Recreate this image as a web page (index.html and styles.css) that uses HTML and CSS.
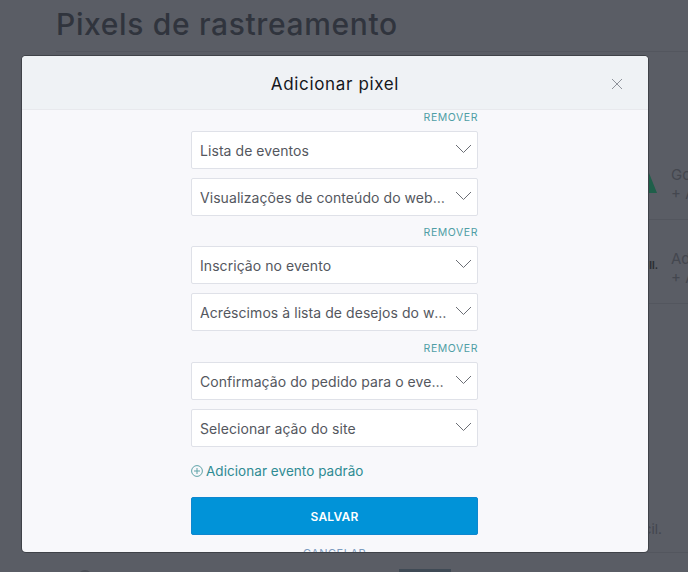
FILE: index.html
```html
<!DOCTYPE html>
<html lang="pt">
<head>
<meta charset="utf-8">
<title>Adicionar pixel</title>
<link rel="stylesheet" href="styles.css">
</head>
<body>
<main class="page">
  <h1 class="page-title">Pixels de rastreamento</h1>
  <section class="list">
    <div class="list-row row-google">
      <svg class="logo-triangle" width="12" height="32" viewBox="0 0 12 32"><path d="M0 32V2l12 30z" fill="#1f5f4a"/></svg>
      <div class="row-text"><span>Google</span><span>+ Adicionar</span></div>
    </div>
    <div class="list-row row-adroll">
      <span class="logo-word">oll.</span>
      <div class="row-text"><span>AdRoll</span><span>+ Adicionar</span></div>
    </div>
    <p class="list-note">fácil.</p>
  </section>
  <div class="page-foot"><span class="foot-dot"></span><span class="foot-bar"></span></div>
</main>

<div class="modal" role="dialog">
  <header class="modal-head">
    <h2 class="modal-title">Adicionar pixel</h2>
    <svg class="close" width="12" height="12" viewBox="0 0 12 12"><path d="M1 1l10 10M11 1L1 11" stroke="#8f939b" stroke-width="1" fill="none"/></svg>
  </header>
  <div class="modal-body">
    <div class="form">
      <div class="group group-first">
        <a class="remove">REMOVER</a>
        <div class="select"><span class="select-text">Lista de eventos</span><svg class="chev" width="17" height="10" viewBox="0 0 17 10"><path d="M1 1l7.500 7.500L16 1" stroke="#6b6e75" stroke-width="1" fill="none"/></svg></div>
        <div class="select"><span class="select-text">Visualizações de conteúdo do website</span><svg class="chev" width="17" height="10" viewBox="0 0 17 10"><path d="M1 1l7.500 7.500L16 1" stroke="#6b6e75" stroke-width="1" fill="none"/></svg></div>
      </div>
      <div class="group">
        <a class="remove">REMOVER</a>
        <div class="select"><span class="select-text">Inscrição no evento</span><svg class="chev" width="17" height="10" viewBox="0 0 17 10"><path d="M1 1l7.500 7.500L16 1" stroke="#6b6e75" stroke-width="1" fill="none"/></svg></div>
        <div class="select"><span class="select-text">Acréscimos à lista de desejos do website</span><svg class="chev" width="17" height="10" viewBox="0 0 17 10"><path d="M1 1l7.500 7.500L16 1" stroke="#6b6e75" stroke-width="1" fill="none"/></svg></div>
      </div>
      <div class="group">
        <a class="remove">REMOVER</a>
        <div class="select"><span class="select-text">Confirmação do pedido para o evento</span><svg class="chev" width="17" height="10" viewBox="0 0 17 10"><path d="M1 1l7.500 7.500L16 1" stroke="#6b6e75" stroke-width="1" fill="none"/></svg></div>
        <div class="select"><span class="select-text">Selecionar ação do site</span><svg class="chev" width="17" height="10" viewBox="0 0 17 10"><path d="M1 1l7.500 7.500L16 1" stroke="#6b6e75" stroke-width="1" fill="none"/></svg></div>
      </div>
      <a class="add">
        <svg width="12" height="12" viewBox="0 0 12 12"><circle cx="6" cy="6" r="5.400" stroke="#5fa3a8" fill="none"/><path d="M6 3v6M3 6h6" stroke="#5fa3a8" fill="none"/></svg>
        <span>Adicionar evento padrão</span>
      </a>
      <button class="save">SALVAR</button>
      <a class="cancel">CANCELAR</a>
    </div>
  </div>
</div>
</body>
</html>
```
FILE: styles.css
```css
html, body {
  margin: 0;
  height: 100%;
  overflow: hidden;
  background: #5a5d65;
  font-family: "Inter", "Liberation Sans", sans-serif;
}
.page {
  height: 572px;
  padding-left: 56px;
  display: flex;
  flex-direction: column;
  box-sizing: border-box;
  overflow: hidden;
}
.page-title {
  margin: 0;
  height: 52px;
  box-sizing: border-box;
  padding-top: 6px;
  border-bottom: 1px solid #53565e;
  font-size: 30px;
  line-height: 36px;
  font-weight: 500;
  letter-spacing: 0.65px;
  color: #30343d;
}
.list {
  height: 501px;
  box-sizing: border-box;
  padding-top: 84px;
  border-bottom: 1px solid #53565e;
  display: flex;
  flex-direction: column;
  align-items: flex-end;
}
.list-row {
  width: 100%;
  height: 84px;
  box-sizing: border-box;
  border-bottom: 1px solid #53565e;
  display: flex;
  justify-content: flex-end;
  align-items: center;
  overflow: hidden;
}
.logo-triangle { margin-right: 14px; align-self: flex-start; margin-top: 25px; }
.logo-word { margin-right: 13px; margin-top: 6px; font-size: 10px; font-weight: 700; color: #2a2d33; }
.row-text {
  width: 17px;
  margin-top: 13px;
  display: flex;
  flex-direction: column;
  gap: 2px;
  font-size: 15px;
  line-height: 17px;
  color: #44474f;
  white-space: nowrap;
}
.list-note {
  margin: 217px 26px 0 0;
  font-size: 13.500px;
  line-height: 16px;
  color: #43464e;
}
.page-foot {
  position: relative;
  flex: 1;
}
.foot-dot {
  position: absolute;
  left: 22px;
  top: 17px;
  width: 14px;
  height: 14px;
  border-radius: 50%;
  background: #4a4d55;
}
.foot-bar {
  position: absolute;
  left: 343px;
  top: 16px;
  width: 52px;
  height: 10px;
  background: #3f4a55;
}
.modal {
  position: absolute;
  left: 22px;
  top: 56px;
  width: 626px;
  height: 496px;
  background: #f8f8fb;
  border-radius: 4px;
  overflow: hidden;
  box-shadow: 0 0 0 1px #3f4248;
  display: flex;
  flex-direction: column;
}
.modal-head {
  position: relative;
  height: 54px;
  flex: none;
  box-sizing: border-box;
  padding-top: 2px;
  background: #eff2f5;
  border-bottom: 1px solid #e8e9ed;
  display: flex;
  align-items: center;
  justify-content: center;
}
.modal-title {
  margin: 0;
  font-size: 17px;
  font-weight: 400;
  letter-spacing: 0.65px;
  color: #15171c;
}
.close {
  position: absolute;
  right: 25px;
  top: 22px;
}
.modal-body {
  flex: 1;
  overflow: hidden;
  display: flex;
  justify-content: center;
}
.form {
  width: 287px;
  margin-right: 1px;
  display: flex;
  flex-direction: column;
}
.group {
  display: flex;
  flex-direction: column;
  margin-bottom: 10px;
}
.group-first { margin-bottom: 9px; }
.remove {
  align-self: flex-end;
  height: 21px;
  font-size: 10.500px;
  line-height: 15px;
  letter-spacing: 0.55px;
  color: #4f9ea5;
}
.select {
  height: 38px;
  box-sizing: border-box;
  margin-bottom: 9px;
  padding: 0 5px 0 8px;
  background: #fff;
  border: 1px solid #dfe1e8;
  border-radius: 2px;
  display: flex;
  align-items: center;
  gap: 8px;
}
.select:last-child { margin-bottom: 0; }
.select-text {
  flex: 1;
  min-width: 0;
  overflow: hidden;
  white-space: nowrap;
  text-overflow: ellipsis;
  font-size: 14px;
  letter-spacing: 0.06px;
  color: #54575e;
}
.chev { flex: none; margin-top: -2px; }
.add {
  display: flex;
  align-items: center;
  gap: 3px;
  height: 20px;
  margin-top: 6px;
  font-size: 13.500px;
  letter-spacing: 0.05px;
  color: #2f8b93;
}
.save {
  display: block;
  width: 100%;
  height: 38px;
  flex: none;
  margin-top: 18px;
  padding: 0;
  background: #0193d8;
  border: 1px solid #0f87cf;
  border-radius: 2px;
  font-family: inherit;
  font-size: 12px;
  font-weight: 600;
  letter-spacing: 0.2px;
  color: #fff;
}
.cancel {
  margin-top: 11px;
  text-align: center;
  font-size: 11px;
  line-height: 14px;
  letter-spacing: 0.5px;
  color: #7d9cc0;
}
```
